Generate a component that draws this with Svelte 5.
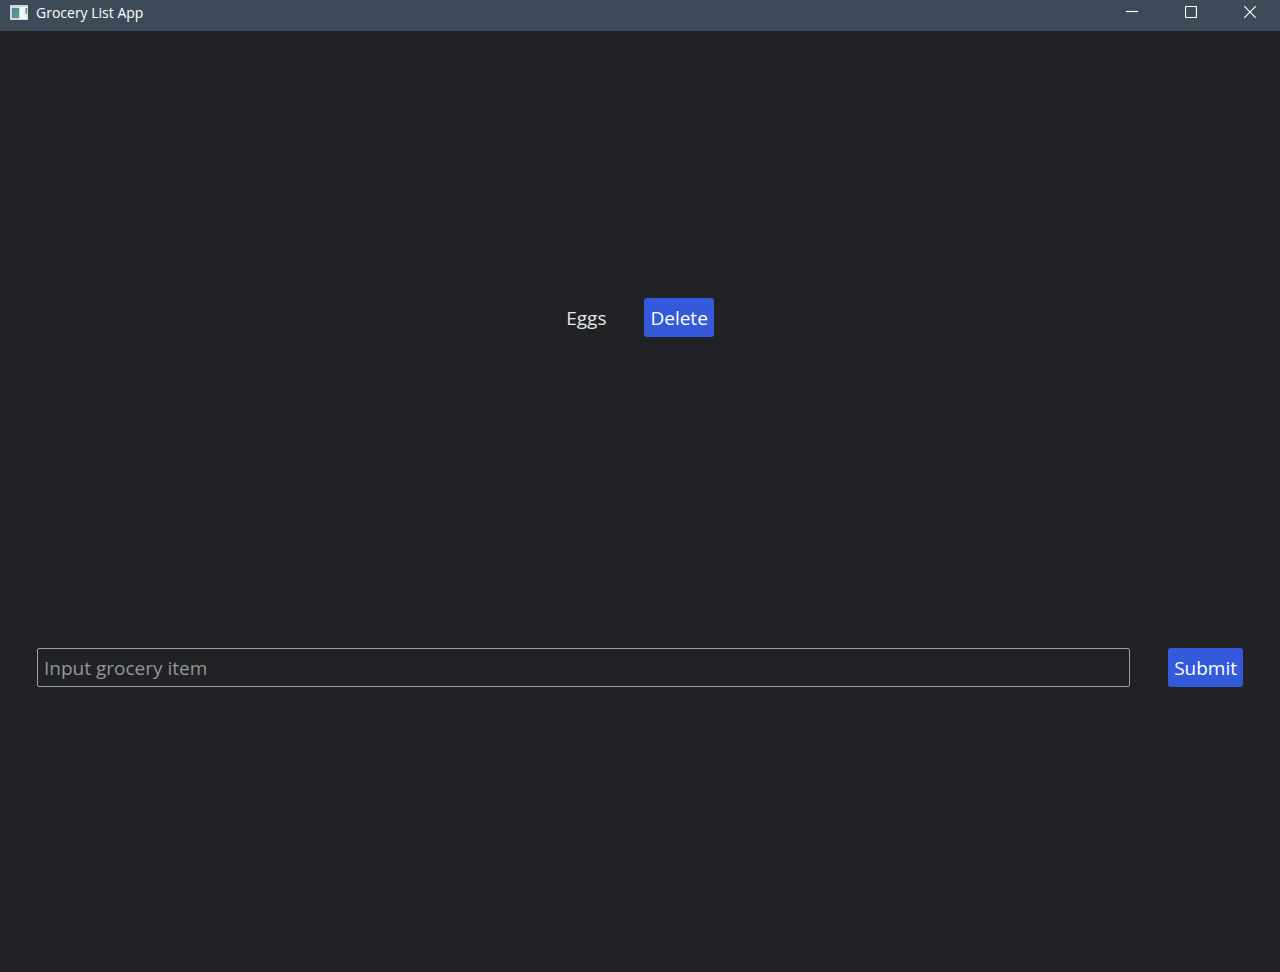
<script lang="ts">
	interface Grocery {
		id: number;
		name: string;
	}

	let nextId = 2;
	let items = $state<Grocery[]>([{ id: 1, name: 'Eggs' }]);
	let newItem = $state('');

	function addItem(e: SubmitEvent) {
		e.preventDefault();
		const name = newItem.trim();
		if (!name) return;
		items.push({ id: nextId++, name });
		newItem = '';
	}

	function deleteItem(id: number) {
		items = items.filter((item) => item.id !== id);
	}
</script>

<div class="window">
	<header class="titlebar">
		<svg class="app-icon" width="18" height="15" viewBox="0 0 18 15" aria-hidden="true">
			<defs>
				<linearGradient id="pane" x1="0" y1="0" x2="1" y2="1">
					<stop offset="0" stop-color="#4a84a8" />
					<stop offset="1" stop-color="#57a878" />
				</linearGradient>
			</defs>
			<rect width="18" height="15" fill="#d3d6d9" />
			<rect x="1" y="2" width="16" height="12" fill="#f4f5f6" />
			<rect x="2" y="3" width="7" height="10" fill="url(#pane)" stroke="#5c7f8c" stroke-width="0.5" />
			<rect x="15.5" y="3" width="1.5" height="6" fill="url(#pane)" />
		</svg>
		<span class="title">Grocery List App</span>
		<div class="controls">
			<button type="button" aria-label="Minimize">
				<svg width="12" height="12" viewBox="0 0 12 12"><path d="M0 5.5H12" /></svg>
			</button>
			<button type="button" aria-label="Maximize">
				<svg width="12" height="12" viewBox="0 0 12 12">
					<rect x="0.5" y="0.5" width="11" height="11" rx="1" />
				</svg>
			</button>
			<button type="button" aria-label="Close">
				<svg width="12" height="12" viewBox="0 0 12 12"><path d="M0.3 0.3L11.7 11.7M11.7 0.3L0.3 11.7" /></svg>
			</button>
		</div>
	</header>

	<main>
		<ul class="items">
			{#each items as item (item.id)}
				<li>
					<span class="name">{item.name}</span>
					<button class="btn" type="button" onclick={() => deleteItem(item.id)}>Delete</button>
				</li>
			{/each}
		</ul>

		<form onsubmit={addItem}>
			<input
				type="text"
				aria-label="Grocery item"
				placeholder="Input grocery item"
				bind:value={newItem}
			/>
			<button class="btn" type="submit">Submit</button>
		</form>
	</main>
</div>

<style>
	:global(body) {
		margin: 0;
		background: #212226;
	}

	.window {
		display: flex;
		flex-direction: column;
		min-height: 100vh;
		background: #212226;
		color: #e6e6e6;
		font-family: 'Segoe UI', 'Open Sans', 'Noto Sans', sans-serif;
		font-size: 19px;
		line-height: 27px;
	}

	.titlebar {
		display: flex;
		align-items: center;
		height: 24px;
		padding: 0 1px 7px 10px;
		background: #3d4b58;
		color: #ffffff;
	}

	.app-icon {
		margin-right: 8px;
	}

	.title {
		font-size: 14px;
		line-height: 20px;
		padding-top: 1px;
	}

	.controls {
		display: flex;
		align-self: stretch;
		margin-left: auto;
	}

	.controls button {
		display: flex;
		align-items: center;
		justify-content: center;
		width: 59px;
		padding: 0;
		border: none;
		background: none;
	}

	.controls svg {
		fill: none;
		stroke: #ffffff;
		stroke-width: 1.2;
	}

	main {
		flex: 1;
		display: grid;
		grid-template-rows: 31fr 20fr;
	}

	.items {
		display: flex;
		flex-direction: column;
		align-items: center;
		justify-content: center;
		gap: 12px;
		margin: 0;
		padding: 2px 0 0;
		list-style: none;
	}

	.items li {
		display: flex;
		align-items: center;
		gap: 38px;
	}

	.name {
		padding: 7px 0 5px;
	}

	form {
		display: flex;
		align-items: flex-start;
		gap: 38px;
		padding: 45px 37px;
	}

	input {
		flex: 1;
		min-width: 0;
		padding: 6px 6px 4px;
		border: 1px solid #a0a09d;
		border-radius: 2px;
		background: transparent;
		color: #e6e6e6;
		font: inherit;
	}

	input::placeholder {
		color: #969696;
		opacity: 1;
	}

	.btn {
		padding: 7px 6px 5px;
		border: none;
		border-radius: 3px;
		background: #3459db;
		color: #ffffff;
		font: inherit;
		cursor: pointer;
	}
</style>
